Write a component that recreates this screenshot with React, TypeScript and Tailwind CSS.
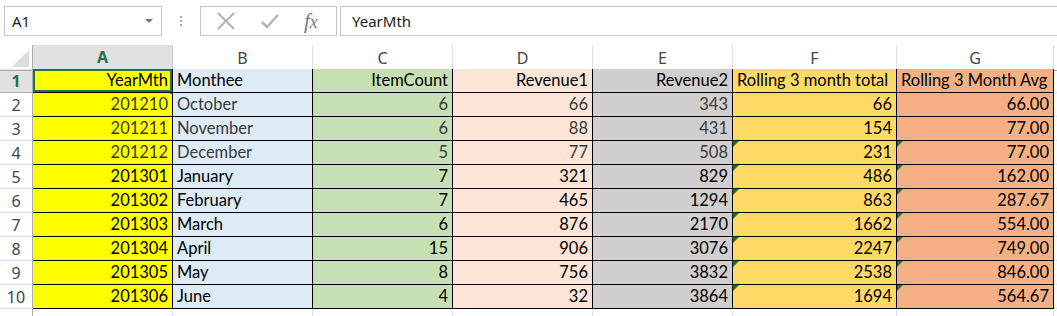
import React from "react";

type Row = {
  ym: string;
  month: string;
  items: string;
  rev1: string;
  rev2: string;
  total: string;
  avg: string;
};

const ROWS: Row[] = [
  { ym: "201210", month: "October", items: "6", rev1: "66", rev2: "343", total: "66", avg: "66.00" },
  { ym: "201211", month: "November", items: "6", rev1: "88", rev2: "431", total: "154", avg: "77.00" },
  { ym: "201212", month: "December", items: "5", rev1: "77", rev2: "508", total: "231", avg: "77.00" },
  { ym: "201301", month: "January", items: "7", rev1: "321", rev2: "829", total: "486", avg: "162.00" },
  { ym: "201302", month: "February", items: "7", rev1: "465", rev2: "1294", total: "863", avg: "287.67" },
  { ym: "201303", month: "March", items: "6", rev1: "876", rev2: "2170", total: "1662", avg: "554.00" },
  { ym: "201304", month: "April", items: "15", rev1: "906", rev2: "3076", total: "2247", avg: "749.00" },
  { ym: "201305", month: "May", items: "8", rev1: "756", rev2: "3832", total: "2538", avg: "846.00" },
  { ym: "201306", month: "June", items: "4", rev1: "32", rev2: "3864", total: "1694", avg: "564.67" },
];

const COLS = "grid grid-cols-[33px_140px_140px_140px_140px_140px_164px_157px_1fr]";
const CELL = "relative h-[24px] border-r border-b border-black px-[4px] leading-[23px] whitespace-nowrap overflow-hidden";

function Flag() {
  return (
    <span className="absolute left-0 top-0 h-0 w-0 border-t-[6px] border-r-[6px] border-t-[#0b7a26] border-r-transparent" />
  );
}

function FormulaBar() {
  return (
    <div className="flex h-[41px] items-start pt-[6px] pl-[4px] font-['Noto_Sans',sans-serif] text-[15px] text-[#222]">
      <div className="flex h-[30px] w-[158px] items-center justify-between border border-[#c6c6c6] pl-[7px] pr-[8px]">
        <span>A1</span>
        <span className="h-0 w-0 border-x-[4px] border-t-[4px] border-x-transparent border-t-[#777]" />
      </div>
      <div className="flex h-[30px] w-[38px] flex-col items-center justify-center gap-[2px]">
        <span className="h-[2px] w-[2px] bg-[#aaa]" />
        <span className="h-[2px] w-[2px] bg-[#aaa]" />
        <span className="h-[2px] w-[2px] bg-[#aaa]" />
      </div>
      <div className="flex h-[30px] w-[137px] items-center border border-[#c6c6c6]">
        <svg width="20" height="20" viewBox="0 0 20 20" className="ml-[15px]">
          <path d="M2 2 L18 18 M18 2 L2 18" stroke="#b4b4b4" strokeWidth="2" fill="none" />
        </svg>
        <svg width="20" height="20" viewBox="0 0 20 20" className="ml-[24px]">
          <path d="M2 11 L7 16 L18 4" stroke="#b4b4b4" strokeWidth="2.5" fill="none" />
        </svg>
        <span className="ml-[24px] font-['Liberation_Serif',serif] text-[21px] italic leading-none text-[#7a7a7a]">
          f<span className="text-[18px]">x</span>
        </span>
      </div>
      <div className="ml-[3px] flex h-[30px] flex-1 items-center border border-r-0 border-[#c6c6c6] pl-[11px]">
        YearMth
      </div>
    </div>
  );
}

function Headers() {
  const letters = ["B", "C", "D", "E", "F", "G"];
  return (
    <div className={`${COLS} mt-[4px] h-[24px] font-['Noto_Sans',sans-serif] text-[16px] text-[#444]`}>
      <div className="relative border-r border-b border-[#ababab]">
        <span className="absolute right-[3px] bottom-[3px] h-0 w-0 border-b-[17px] border-l-[17px] border-b-[#dcdcdc] border-l-transparent" />
      </div>
      <div className="flex items-center justify-center border-r border-[#c8c8c8] border-b-2 border-b-[#217346] bg-[#e1e1e1] font-bold text-[#217346]">
        A
      </div>
      {letters.map((l) => (
        <div key={l} className="flex items-center justify-center border-r border-b border-r-[#e1e1e1] border-b-[#ababab] bg-white">
          {l}
        </div>
      ))}
      <div className="border-b border-[#ababab]" />
    </div>
  );
}

function RowNum({ n, active }: { n: number; active?: boolean }) {
  return (
    <div
      className={
        active
          ? "flex h-[24px] items-center justify-center border-r border-b border-[#ababab] bg-[#e1e1e1] font-['Noto_Sans',sans-serif] text-[16px] font-bold text-[#217346]"
          : "flex h-[24px] items-center justify-center border-r border-b border-r-[#ababab] border-b-[#e1e1e1] font-['Noto_Sans',sans-serif] text-[16px] text-[#444]"
      }
    >
      {n}
    </div>
  );
}

export default function App() {
  return (
    <div className="h-[316px] w-[1057px] overflow-hidden bg-white">
      <FormulaBar />
      <Headers />
      <div className="font-['Lato',sans-serif] text-[16.5px] text-black">
        <div className={COLS}>
          <RowNum n={1} active />
          <div className={`${CELL} bg-[#ffff00] text-right`}>
            YearMth
            <span className="pointer-events-none absolute inset-0 border-2 border-[#217346]" />
          </div>
          <div className={`${CELL} bg-[#ddebf7]`}>Monthee</div>
          <div className={`${CELL} bg-[#c6e0b4] text-right`}>ItemCount</div>
          <div className={`${CELL} bg-[#fce4d6] text-right`}>Revenue1</div>
          <div className={`${CELL} bg-[#d0cece] text-right`}>Revenue2</div>
          <div className={`${CELL} bg-[#ffd966]`}>Rolling 3 month total</div>
          <div className={`${CELL} bg-[#f4b084]`}>Rolling 3 Month Avg</div>
          <div className="border-b border-[#e1e1e1]" />
        </div>
        {ROWS.map((r, i) => {
          const dim = i < 3 ? "text-[#3a3a3a]" : "text-black";
          const flag = i >= 2;
          return (
            <div key={r.ym} className={COLS}>
              <RowNum n={i + 2} />
              <div className={`${CELL} bg-[#ffff00] text-right ${dim}`}>
                {r.ym}
                {i === 0 && (
                  <span className="absolute -top-[5px] right-[-4px] h-[7px] w-[7px] border border-white bg-[#217346]" />
                )}
              </div>
              <div className={`${CELL} bg-[#ddebf7] ${dim}`}>{r.month}</div>
              <div className={`${CELL} bg-[#c6e0b4] text-right ${dim}`}>{r.items}</div>
              <div className={`${CELL} bg-[#fce4d6] text-right ${dim}`}>{r.rev1}</div>
              <div className={`${CELL} bg-[#d0cece] text-right ${dim}`}>{r.rev2}</div>
              <div className={`${CELL} bg-[#ffd966] text-right`}>
                {flag && <Flag />}
                {r.total}
              </div>
              <div className={`${CELL} bg-[#f4b084] text-right`}>
                {flag && <Flag />}
                {r.avg}
              </div>
              <div className="border-b border-[#e1e1e1]" />
            </div>
          );
        })}
        <div className={`${COLS} h-[10px]`}>
          <div className="border-r border-[#ababab]" />
          <div className="border-r border-[#e1e1e1]" />
          <div className="border-r border-[#e1e1e1]" />
          <div className="border-r border-[#e1e1e1]" />
          <div className="border-r border-[#e1e1e1]" />
          <div className="border-r border-[#e1e1e1]" />
          <div className="border-r border-[#e1e1e1]" />
          <div className="border-r border-[#e1e1e1]" />
          <div />
        </div>
      </div>
    </div>
  );
}
